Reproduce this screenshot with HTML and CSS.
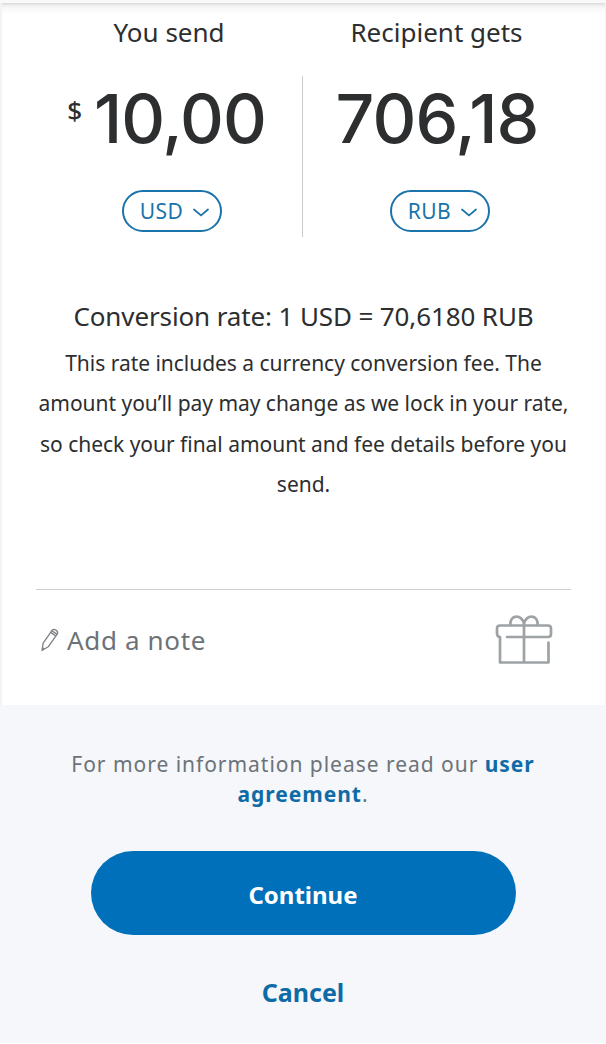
FILE: index.html
```html
<!DOCTYPE html>
<html lang="en">
<head>
<meta charset="utf-8">
<title>Send money</title>
<link rel="stylesheet" href="styles.css">
</head>
<body>
<main class="page">
  <section class="card">
    <div class="labels">
      <h2 class="label label-send">You send</h2>
      <h2 class="label label-get">Recipient gets</h2>
    </div>
    <div class="amounts">
      <div class="side">
        <div class="amount"><span class="sign">$</span><span class="value value-send">10,00</span></div>
        <button class="currency"><span>USD</span><svg class="chevron" viewBox="0 0 16 10"><path d="M1 1.5 8 7.5 15 1.5"/></svg></button>
      </div>
      <div class="side side-get">
        <div class="amount"><span class="value value-get">706,18</span></div>
        <button class="currency"><span>RUB</span><svg class="chevron" viewBox="0 0 16 10"><path d="M1 1.5 8 7.5 15 1.5"/></svg></button>
      </div>
    </div>
    <p class="rate">Conversion rate: 1 USD = 70,6180 RUB</p>
    <p class="details">This rate includes a currency conversion fee. The<br>amount you’ll pay may change as we lock in your rate,<br>so check your final amount and fee details before you<br>send.</p>
    <div class="note-row">
      <svg class="pencil" viewBox="0 0 20 26"><path d="M2 23.5 3.2 16.2 12.2 3.2C13.6 1.4 18.8 3.6 17.4 6.8L8.2 19.8ZM10.8 5.4 15.8 9M12 3.8 17 7.4M2.6 20.8 4.6 22.2"/></svg>
      <span class="note">Add a note</span>
      <svg class="gift" viewBox="0 0 58 52"><path d="M12 23H53Q56 23 56 20V14.500Q56 11.500 53 11.500H5Q2 11.500 2 14.500V19Q2 23 5 23V48.500H53.500V28.500M29 11.500V48.500M15.500 11.500C14 0 27.500 0 29 10C30.500 0 44 0 42.500 11.500"/></svg>
    </div>
  </section>
  <section class="footer">
    <p class="info">For more information please read our <a class="link">user</a><br><a class="link">agreement</a>.</p>
    <button class="continue">Continue</button>
    <a class="cancel">Cancel</a>
  </section>
</main>
</body>
</html>
```
FILE: styles.css
```css
* { box-sizing: border-box; }
body { margin: 0; background: #f5f7fa; font-family: "Noto Sans", sans-serif; color: #2c2e2f; }
h2, p { margin: 0; font-weight: 400; }
button { font-family: inherit; padding: 0; }
.page { height: 1044px; padding-top: 3px; background: linear-gradient(#f9f9fa 3px, #f5f7fa 3px); border-bottom: 1px solid #fff; white-space: nowrap; overflow: hidden; }
.card { height: 702px; padding: 0 34px; background: linear-gradient(#dadada, #f3f3f3 3px, #fbfbfb 7px, #fff 12px); border-left: 2px solid #f3f3f5; border-right: 1px solid #f3f3f5; }
.labels { display: grid; grid-template-columns: 266px 269px; height: 73px; padding-top: 9px; }
.label { font-size: 26px; line-height: 40px; text-align: center; }
.amounts { display: grid; grid-template-columns: 266px 269px; height: 161px; }
.side { display: flex; flex-direction: column; align-items: center; justify-content: space-between; padding-bottom: 5px; }
.side-get { border-left: 1px solid #c9cacb; }
.amount { display: flex; justify-content: center; height: 84px; line-height: 84px; }
.side .amount { margin-right: 5px; }
.side-get .amount { margin-right: 0; }
.sign { font-size: 26px; font-weight: 500; line-height: 68px; margin-right: 12px; }
.value { font-family: Inter, sans-serif; font-size: 68px; font-weight: 500; }
.value-send { letter-spacing: -1px; }
.value-get { letter-spacing: -0.8px; }
.currency { display: flex; align-items: center; justify-content: center; gap: 10px; width: 100px; height: 42px; margin-left: 6px; padding-left: 5px; border: 2px solid #1a73aa; border-radius: 21px; background: #fff; color: #1a73aa; font-size: 21px; letter-spacing: 0.4px; }
.chevron { width: 16px; height: 10px; margin-top: 3px; fill: none; stroke: #1a73aa; stroke-width: 1.7; stroke-linecap: round; }
.rate { margin-top: 59px; font-size: 26px; line-height: 40px; letter-spacing: -0.12px; text-align: center; }
.details { margin-top: 7px; height: 247px; font-size: 21px; line-height: 40.3px; letter-spacing: -0.03px; text-align: center; border-bottom: 1px solid #cfd0d2; }
.note-row { display: flex; align-items: center; height: 100px; padding: 0 18px 0 4px; color: #6c7378; }
.pencil { width: 20px; height: 26px; fill: none; stroke: #7b8184; stroke-width: 1.3; stroke-linejoin: round; }
.note { margin-left: 7px; font-size: 26px; letter-spacing: 0.65px; }
.gift { width: 58px; height: 52px; margin-left: auto; fill: none; stroke: #9da3a5; stroke-width: 2.7; stroke-linecap: round; stroke-linejoin: round; }
.footer { display: flex; flex-direction: column; align-items: center; padding-top: 44px; }
.info { font-size: 21px; line-height: 30px; letter-spacing: 0.97px; text-align: center; color: #6c7378; }
.link { color: #0f6ba6; font-weight: 700; }
.continue { width: 425px; height: 84px; margin-top: 42px; border: 0; border-radius: 42px; background: #0070ba; color: #fff; font-size: 24px; font-weight: 700; padding-top: 3px; }
.cancel { margin-top: 39px; font-size: 25px; line-height: 36px; font-weight: 700; color: #0f6ba6; }
```
